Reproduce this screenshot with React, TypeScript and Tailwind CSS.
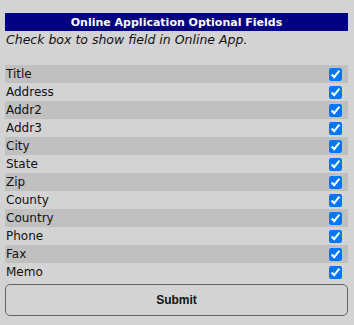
import React from "react";

const fields = ["Title","Address","Addr2","Addr3","City","State","Zip","County","Country","Phone","Fax","Memo"];

export default function App() {
  return (
    <div className="min-h-[325px] w-[354px] bg-[#d3d3d3] pt-[13px] pl-[5px]" style={{ fontFamily: '"DejaVu Sans", sans-serif' }}>
      <div className="w-[343px]">
        <div className="h-[18px] bg-[#000080] text-center text-[11px] font-bold leading-[19px] text-white">
          Online Application Optional Fields
        </div>
        <div className="h-[18px] pl-[1px] text-[12.5px] italic leading-[18px] text-[#111]">
          Check box to show field in Online App.
        </div>
        <div className="mt-[16px] flex flex-col">
          {fields.map((f, i) => (
            <div key={f} className={`flex h-[18px] items-center justify-between pl-[1px] pr-[6px] ${i % 2 === 0 ? "bg-[#c0c0c0]" : ""}`}>
              <span className="text-[12px] leading-[19px] text-[#111]">{f}</span>
              <input type="checkbox" defaultChecked className="m-0 h-[13px] w-[13px]" />
            </div>
          ))}
        </div>
        <button className="mt-[3px] h-[32px] w-full rounded-[5px] border border-[#666] bg-[#d3d3d3] text-[12px] font-bold text-[#111]" style={{ fontFamily: '"Liberation Sans", Arial, sans-serif' }}>
          Submit
        </button>
      </div>
    </div>
  );
}
